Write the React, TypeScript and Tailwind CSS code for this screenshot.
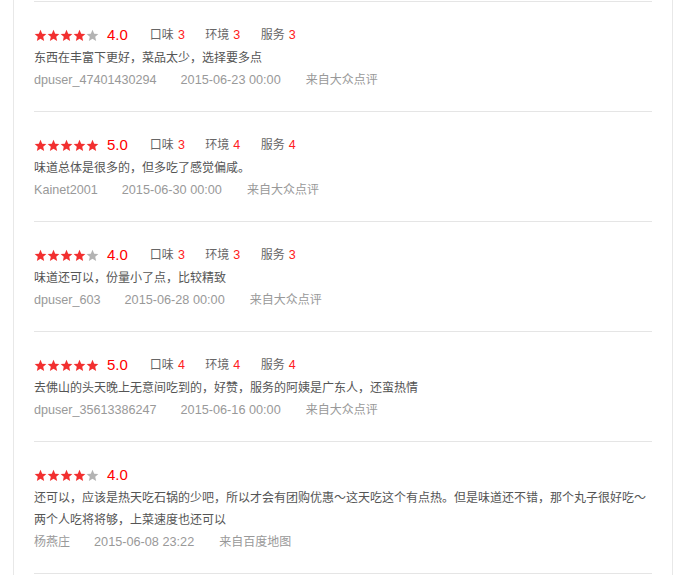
const reviews = [
  {
    stars: 4,
    score: "4.0",
    sub: ["3", "3", "3"],
    text: ["东西在丰富下更好，菜品太少，选择要多点"],
    user: "dpuser_47401430294",
    cjkUser: false,
    time: "2015-06-23 00:00",
    from: "来自大众点评"
  },
  {
    stars: 5,
    score: "5.0",
    sub: ["3", "4", "4"],
    text: ["味道总体是很多的，但多吃了感觉偏咸。"],
    user: "Kainet2001",
    cjkUser: false,
    time: "2015-06-30 00:00",
    from: "来自大众点评"
  },
  {
    stars: 4,
    score: "4.0",
    sub: ["3", "3", "3"],
    text: ["味道还可以，份量小了点，比较精致"],
    user: "dpuser_603",
    cjkUser: false,
    time: "2015-06-28 00:00",
    from: "来自大众点评"
  },
  {
    stars: 5,
    score: "5.0",
    sub: ["4", "4", "4"],
    text: ["去佛山的头天晚上无意间吃到的，好赞，服务的阿姨是广东人，还蛮热情"],
    user: "dpuser_35613386247",
    cjkUser: false,
    time: "2015-06-16 00:00",
    from: "来自大众点评"
  },
  {
    stars: 4,
    score: "4.0",
    sub: null,
    text: [
      "还可以，应该是热天吃石锅的少吧，所以才会有团购优惠～这天吃这个有点热。但是味道还不错，那个丸子很好吃～",
      "两个人吃将将够，上菜速度也还可以"
    ],
    user: "杨燕庄",
    cjkUser: true,
    time: "2015-06-08 23:22",
    from: "来自百度地图"
  }
];

const labels = ["口味", "环境", "服务"];

const Star = ({ on }: { on: boolean }) => (
  <svg viewBox="0 0 24 24" className="w-[13px] h-[13px]" fill={on ? "#f22f2f" : "#b3b3b3"}>
    <path d="M12 1.5l3.1 7.1 7.7.7-5.8 5.1 1.7 7.6L12 18l-6.7 4 1.7-7.6-5.8-5.1 7.7-.7z" />
  </svg>
);

const App = () => {
  return (
    <div className="w-[686px] h-[575px] bg-white overflow-hidden">
      <div className="ml-[13px] w-[660px] h-full border-x border-[#e8e8e8] px-[20px] pt-px">
        {reviews.map((r, i) => (
          <div key={i} className="border-t border-[#e5e5e5] pt-[22px] pb-[21px]">
            <div className="flex items-center h-[22px]">
              <div className="flex">
                {[0, 1, 2, 3, 4].map((n) => (
                  <Star key={n} on={n < r.stars} />
                ))}
              </div>
              <span className="ml-[8px] text-[15px] text-[#ff0000] font-['Liberation_Sans']">{r.score}</span>
              {r.sub && (
                <div className="flex ml-[22px] text-[12px]">
                  {labels.map((l, k) => (
                    <span key={k} className="mr-[20.5px] text-[#666] font-['Noto_Sans_CJK_SC']">
                      {l}
                      <span className="ml-[4px] text-[12.5px] text-[#ff2020] font-['Liberation_Sans']">{r.sub[k]}</span>
                    </span>
                  ))}
                </div>
              )}
            </div>
            {r.text.map((t, k) => (
              <p key={k} className="h-[22px] leading-[22px] text-[12px] text-[#555] font-['Noto_Sans_CJK_SC',sans-serif] whitespace-nowrap">
                {t}
              </p>
            ))}
            <div className="flex items-baseline h-[22px] leading-[22px] text-[#999]">
              <span
                className={
                  r.cjkUser
                    ? "mr-[24px] text-[12px] font-['Noto_Sans_CJK_SC',sans-serif]"
                    : "mr-[24px] text-[12.6px] font-['Liberation_Sans','Noto_Sans_CJK_SC',sans-serif]"
                }
              >
                {r.user}
              </span>
              <span className="mr-[25px] text-[12.7px] font-['Liberation_Sans',sans-serif]">{r.time}</span>
              <span className="text-[12px] font-['Noto_Sans_CJK_SC',sans-serif]">{r.from}</span>
            </div>
          </div>
        ))}
        <div className="border-t border-[#e5e5e5]" />
      </div>
    </div>
  );
};

export default App;
